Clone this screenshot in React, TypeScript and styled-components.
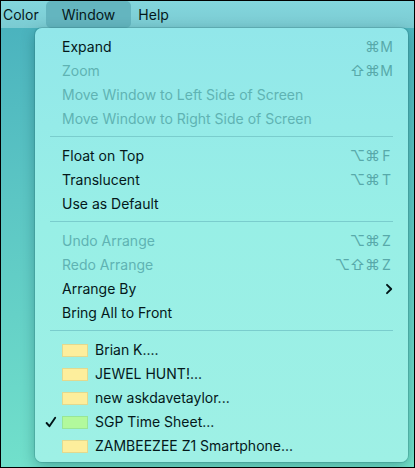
import React from 'react';
import styled, { createGlobalStyle } from 'styled-components';

const GlobalStyle = createGlobalStyle`
  * { box-sizing: border-box; }
  html, body, #root { height: 100%; }
  body { margin: 0; background: #000; }
  button { font: inherit; color: inherit; background: none; border: 0; margin: 0; }
`;

const Desktop = styled.div`
  min-height: 100%;
  display: flex;
  flex-direction: column;
  border: 1px solid #000;
  background: linear-gradient(175deg, #48b0bd 0%, #5cc6c4 40%, #74e3cc 100%);
  color: #04181a;
  font: 14px/24px Inter, sans-serif;
  overflow: hidden;
`;

const MenuBar = styled.nav`
  display: flex;
  height: 27px;
  background: linear-gradient(#83d6dd, #7bcbd2);
`;

const BarItem = styled.button<{ $open?: boolean }>`
  padding: 0 ${(p) => (p.$open ? 16 : 7)}px;
  border-radius: 5px;
  background: ${(p) => (p.$open ? '#64b5bf' : 'transparent')};
  &:first-child { padding-left: 2px; }
`;

const Menu = styled.div`
  margin: 0 6px 5px 34px;
  padding: 7px 15px 4px;
  border-radius: 7px;
  background: linear-gradient(#92e7ea, #98efe6 45%, #9ef0e5);
  box-shadow: 0 0 0 1px rgba(30, 110, 115, 0.25), 0 4px 14px rgba(0, 60, 65, 0.35);
`;

const Item = styled.button`
  display: grid;
  grid-template-columns: 12px 1fr auto;
  align-items: center;
  width: 100%;
  height: 24px;
  padding: 0;
  text-align: left;
  white-space: nowrap;
  &:disabled { color: #5fb3b3; }
`;

const Label = styled.span`
  display: flex;
  align-items: center;
  gap: 7px;
`;

const Mark = styled.span`
  display: flex;
  width: 12px;
  margin-left: -5px;
`;

const Swatch = styled.span<{ $color: string; $edge: string }>`
  width: 26px;
  height: 13px;
  border: 1px solid ${(p) => p.$edge};
  background: ${(p) => p.$color};
`;

const Keys = styled.span`
  display: flex;
  color: #58a9aa;
`;

const Key = styled.kbd<{ $modifier: boolean }>`
  display: flex;
  justify-content: center;
  width: ${(p) => (p.$modifier ? 15 : 13)}px;
  font-family: inherit;
  font-size: ${(p) => (p.$modifier ? 15 : 14)}px;
`;

const Separator = styled.hr`
  height: 1px;
  margin: 5px 0 7px;
  border: 0;
  background: #7acdcd;
`;

const Check = () => (
  <svg width="12" height="12" viewBox="0 0 12 12" fill="none" stroke="#001416" strokeWidth="1.9" strokeLinecap="round" strokeLinejoin="round">
    <path d="M1.6 7 4.4 10.2 10.2 1.8" />
  </svg>
);

const Chevron = () => (
  <svg width="8" height="12" viewBox="0 0 8 12" fill="none" stroke="#001416" strokeWidth="1.9" strokeLinecap="round" strokeLinejoin="round">
    <path d="M2 1.8 6.2 6 2 10.2" />
  </svg>
);

type Entry = {
  label: string;
  keys?: string;
  disabled?: boolean;
  submenu?: boolean;
  swatch?: 'yellow' | 'green';
  checked?: boolean;
};

const swatches = {
  yellow: { fill: '#fdee9c', edge: '#e2d98f' },
  green: { fill: '#b2f99c', edge: '#98e696' },
};

const groups: Entry[][] = [
  [
    { label: 'Expand', keys: '⌘M' },
    { label: 'Zoom', keys: '⇧⌘M', disabled: true },
    { label: 'Move Window to Left Side of Screen', disabled: true },
    { label: 'Move Window to Right Side of Screen', disabled: true },
  ],
  [
    { label: 'Float on Top', keys: '⌥⌘F' },
    { label: 'Translucent', keys: '⌥⌘T' },
    { label: 'Use as Default' },
  ],
  [
    { label: 'Undo Arrange', keys: '⌥⌘Z', disabled: true },
    { label: 'Redo Arrange', keys: '⌥⇧⌘Z', disabled: true },
    { label: 'Arrange By', submenu: true },
    { label: 'Bring All to Front' },
  ],
  [
    { label: 'Brian K....', swatch: 'yellow' },
    { label: 'JEWEL HUNT!...', swatch: 'yellow' },
    { label: 'new askdavetaylor...', swatch: 'yellow' },
    { label: 'SGP Time Sheet...', swatch: 'green', checked: true },
    { label: 'ZAMBEEZEE Z1 Smartphone...', swatch: 'yellow' },
  ],
];

export default function App() {
  return (
    <>
      <GlobalStyle />
      <Desktop>
        <MenuBar>
          <BarItem>Color</BarItem>
          <BarItem $open aria-expanded="true">Window</BarItem>
          <BarItem>Help</BarItem>
        </MenuBar>
        <Menu role="menu" aria-label="Window">
          {groups.map((group, index) => (
            <React.Fragment key={index}>
              {index > 0 && <Separator />}
              {group.map((entry) => (
                <Item
                  key={entry.label}
                  role={entry.swatch ? 'menuitemradio' : 'menuitem'}
                  aria-checked={entry.swatch ? !!entry.checked : undefined}
                  aria-haspopup={entry.submenu ? 'menu' : undefined}
                  disabled={entry.disabled}
                >
                  <Mark>{entry.checked && <Check />}</Mark>
                  <Label>
                    {entry.swatch && (
                      <Swatch $color={swatches[entry.swatch].fill} $edge={swatches[entry.swatch].edge} />
                    )}
                    {entry.label}
                  </Label>
                  {entry.keys && (
                    <Keys>
                      {[...entry.keys].map((key) => (
                        <Key key={key} $modifier={'⌘⇧⌥'.includes(key)}>{key}</Key>
                      ))}
                    </Keys>
                  )}
                  {entry.submenu && <Chevron />}
                </Item>
              ))}
            </React.Fragment>
          ))}
        </Menu>
      </Desktop>
    </>
  );
}
